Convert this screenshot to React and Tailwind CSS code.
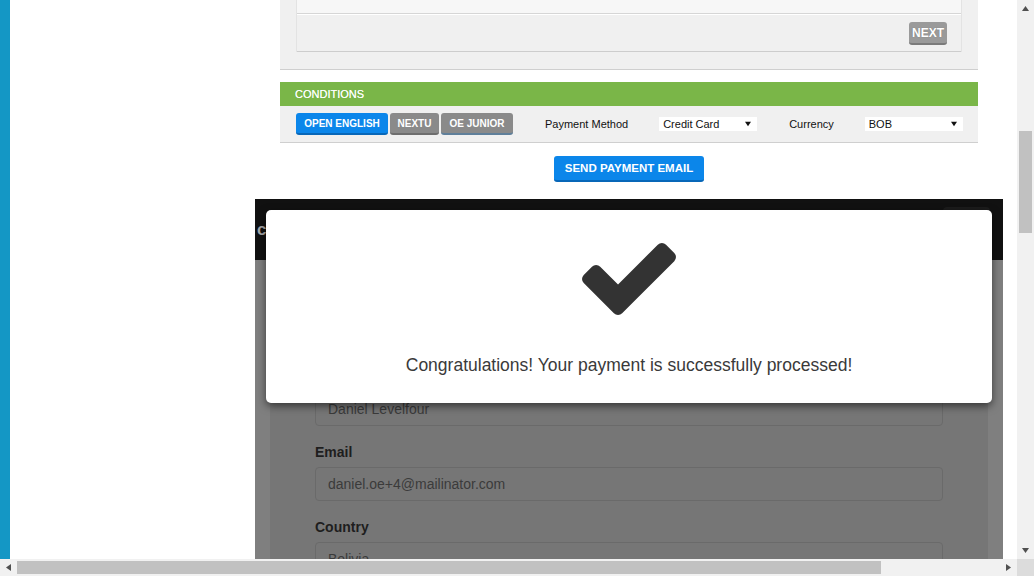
const FONT = "font-['Liberation_Sans',Arial,sans-serif]";

function Tri({ dir = "down", className = "" }) {
  const pts = {
    down: "0,0 7,0 3.5,5",
    up: "0,5 7,5 3.5,0",
    left: "5,0 5,7 0,3.5",
    right: "0,0 0,7 5,3.5",
  }[dir];
  const vb = dir === "left" || dir === "right" ? "0 0 5 7" : "0 0 7 5";
  const w = dir === "left" || dir === "right" ? 5 : 7;
  const h = dir === "left" || dir === "right" ? 7 : 5;
  return (
    <svg width={w} height={h} viewBox={vb} className={className}>
      <polygon points={pts} fill="currentColor" />
    </svg>
  );
}

function Select({ value }) {
  return (
    <div className="w-[98px] h-[14px] bg-white flex items-center justify-between pl-[4px] pr-[6px] text-[11px] text-[#111] leading-none">
      <span>{value}</span>
      <Tri dir="down" className="text-[#111] w-[6px] h-[6px]" />
    </div>
  );
}

function Field({ label, value, first }) {
  return (
    <div className={first ? "flex flex-col" : "flex flex-col mt-[16px]"}>
      <div className="h-[20px] leading-[20px] text-[14px] font-bold text-[#1e1e1e] mb-[5px]">{label}</div>
      <div className="h-[34px] shrink-0 border border-[#6a6a6a] rounded-[4px] px-[12px] flex items-center text-[14px] text-[#3b3b3b]">
        {value}
      </div>
    </div>
  );
}

export default function App() {
  return (
    <div className={`w-[1034px] h-[576px] overflow-hidden bg-white flex flex-col ${FONT}`}>
      <div className="flex h-[559px]">
        <div className="w-[1017px] h-full flex">
          <div className="w-[10px] h-full bg-[#1497c5]" />
          <div className="relative flex-1 flex flex-col">
            {/* top panel */}
            <div className="ml-[270px] w-[698px] h-[70px] bg-[#f0f0f0] border-b border-[#cfcfcf] px-[16px]">
              <div className="border-x border-[#e3e3e3] flex flex-col">
                <div className="h-[14px] bg-[#f7f7f7] border-b border-[#d6d6d6]" />
                <div className="h-[38px] border-t border-t-white border-b border-b-[#cdcdcd] flex items-center justify-end pr-[14px]">
                  <button className="h-[23px] px-[3px] pt-[1px] bg-[#9a9a9a] border-b-2 border-[#7b7b7b] rounded-[3px] text-white font-bold text-[12px] leading-none [text-shadow:0_0_1px_rgba(0,0,0,0.25)]">
                    NEXT
                  </button>
                </div>
              </div>
            </div>

            {/* conditions */}
            <div className="ml-[270px] w-[698px] mt-[12px] h-[24px] bg-[#7ab648] flex items-center pl-[15px] text-white text-[11px] leading-none [text-shadow:0_0_0.5px_rgba(255,255,255,0.8)]">
              CONDITIONS
            </div>
            <div className="ml-[270px] w-[698px] h-[37px] bg-[#f0f0f0] border-b border-[#cfcfcf] flex items-center pl-[16px]">
              <div className="flex gap-[2px]">
                <button className="h-[22px] w-[92px] pt-[2px] bg-[#0b86ea] border-b-2 border-[#0867b8] rounded-[3px] text-white font-bold text-[10px] leading-none">
                  OPEN ENGLISH
                </button>
                <button className="h-[22px] w-[49px] pt-[2px] bg-[#8a8a8a] border-b-2 border-[#6e6e6e] rounded-[3px] text-white font-bold text-[10px] leading-none">
                  NEXTU
                </button>
                <button className="h-[22px] w-[72px] pt-[2px] bg-[#8a8a8a] border-b-2 border-[#5f7f9a] rounded-[3px] text-white font-bold text-[10px] leading-none">
                  OE JUNIOR
                </button>
              </div>
              <span className="ml-[32px] text-[11px] text-[#111]">Payment Method</span>
              <div className="ml-[31px]"><Select value="Credit Card" /></div>
              <span className="ml-[32px] text-[11px] text-[#111]">Currency</span>
              <div className="ml-[31px]"><Select value="BOB" /></div>
            </div>

            <div className="ml-[270px] w-[698px] mt-[13px] flex justify-center">
              <button className="h-[26px] w-[150px] pt-[2px] bg-[#0b86ea] border-b-2 border-[#0867b8] rounded-[3px] text-white font-bold text-[11.5px] leading-none">
                SEND PAYMENT EMAIL
              </button>
            </div>

            {/* dimmed embedded form */}
            <div className="ml-[245px] w-[748px] mt-[17px] flex-1 overflow-hidden flex flex-col">
              <div className="h-[61px] shrink-0 bg-[#111111] flex justify-between">
                <span className="pl-[2px] pt-[22px] text-[17px] font-bold text-[#a8a8a8] leading-none">checkout</span>
                <div className="w-[47px] h-[40px] mt-[8px] mr-[13px] rounded-[4px] bg-[#1c1c1c]" />
              </div>
              <div className="flex-1 flex">
                <div className="w-[15px] bg-[#7f7f7f]" />
                <div className="flex-1 bg-[#767676] flex flex-col px-[45px] pt-[107px]">
                  <Field first label="Full Name" value="Daniel Levelfour" />
                  <Field label="Email" value="daniel.oe+4@mailinator.com" />
                  <Field label="Country" value="Bolivia" />
                </div>
                <div className="w-[15px] bg-[#7f7f7f]" />
              </div>
            </div>

            {/* modal */}
            <div className="absolute left-[256px] top-[210px] w-[726px] h-[193px] bg-white rounded-[5px] shadow-[0_3px_9px_rgba(0,0,0,0.55)] flex flex-col items-center pt-[33px]">
              <svg width="94" height="72" viewBox="121 334 1550 1188">
                <path
                  fill="#333333"
                  d="M1671 566q0 40-28 68l-724 724-136 136q-28 28-68 28t-68-28l-136-136-362-362q-28-28-28-68t28-68l136-136q28-28 68-28t68 28l294 295 656-657q28-28 68-28t68 28l136 136q28 28 28 68z"
                />
              </svg>
              <div className="mt-[39px] text-[17.5px] leading-[22px] text-[#3a3a3a]">
                Congratulations! Your payment is successfully processed!
              </div>
            </div>
          </div>
        </div>

        {/* vertical scrollbar */}
        <div className="w-[17px] h-full bg-[#f1f1f1] flex flex-col items-center">
          <div className="h-[17px] w-full flex items-center justify-center text-[#505050]">
            <Tri dir="up" />
          </div>
          <div className="mt-[114px] w-[13px] h-[102px] bg-[#c1c1c1]" />
          <div className="flex-1" />
          <div className="h-[17px] w-full flex items-center justify-center text-[#505050]">
            <Tri dir="down" />
          </div>
        </div>
      </div>

      {/* horizontal scrollbar */}
      <div className="h-[17px] flex">
        <div className="w-[1017px] h-full bg-[#f1f1f1] flex items-center">
          <div className="w-[17px] h-full flex items-center justify-center text-[#505050]">
            <Tri dir="left" />
          </div>
          <div className="w-[864px] h-[13px] bg-[#c1c1c1]" />
          <div className="flex-1" />
          <div className="w-[17px] h-full flex items-center justify-center text-[#505050]">
            <Tri dir="right" />
          </div>
        </div>
        <div className="w-[17px] h-full bg-[#dcdcdc]" />
      </div>
    </div>
  );
}
